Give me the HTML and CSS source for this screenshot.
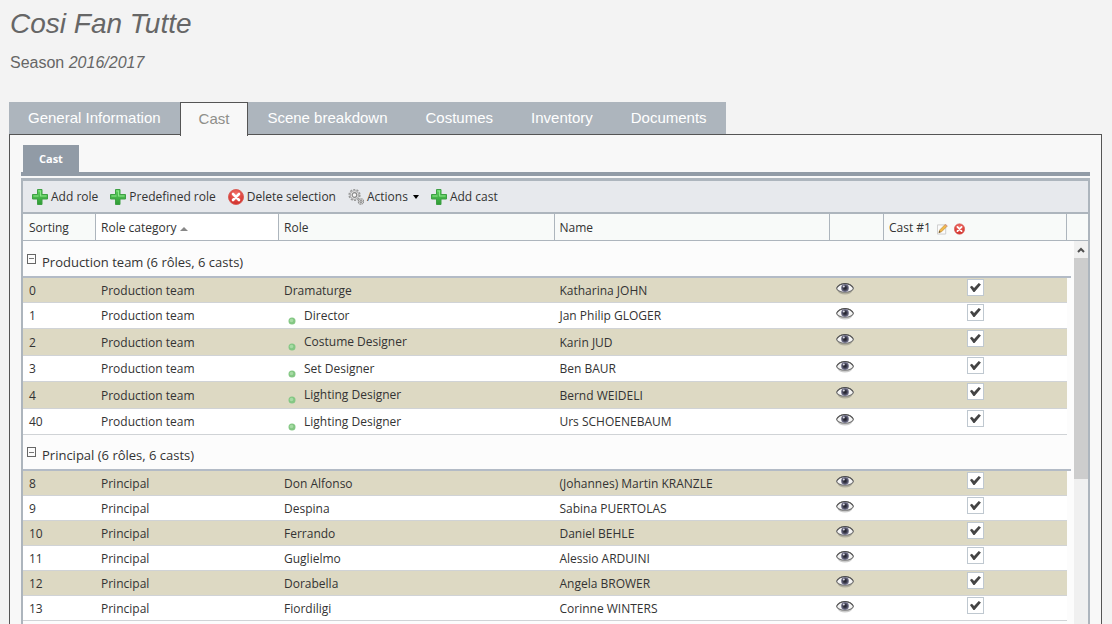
FILE: index.html
```html
<!DOCTYPE html>
<html lang="en">
<head>
    <meta charset="UTF-8">
    <meta name="viewport" content="width=device-width, initial-scale=1.0">
    <title>Cosi Fan Tutte - Cast</title>
    <link rel="stylesheet" href="styles.css">
</head>
<body>
    <!-- icon set -->
    <svg class="sprite" aria-hidden="true">
        <defs>
            <linearGradient id="green" x1="0" y1="0" x2="0" y2="1">
                <stop offset="0" stop-color="#5fd35f"/>
                <stop offset="1" stop-color="#2e9a35"/>
            </linearGradient>
            <radialGradient id="red" cx="0.5" cy="0.3" r="0.7">
                <stop offset="0" stop-color="#f4736b"/>
                <stop offset="1" stop-color="#cf2b27"/>
            </radialGradient>
            <radialGradient id="iris">
                <stop offset="0" stop-color="#1c1c26"/>
                <stop offset="0.5" stop-color="#3c3c4c"/>
                <stop offset="1" stop-color="#7d7d98"/>
            </radialGradient>
        </defs>
        <symbol id="icon-add" viewBox="0 0 16 16">
            <path d="M5.500.5h4.500v5h5.500v4.500h-5.500v5.500h-4.500v-5.500h-5v-4.500h5z" fill="url(#green)" stroke="#3fa045"/>
            <path d="M6.500 1.500h2.500v5h5.500v1h-6.500v-5h-1.500zM1.500 6.500h5v1h-5z" fill="#8be68a"/>
        </symbol>
        <symbol id="icon-delete" viewBox="0 0 16 16">
            <circle cx="8" cy="8" r="7.500" fill="url(#red)" stroke="#d9605a"/>
            <path d="M5 5l6 6M11 5l-6 6" stroke="#fff" stroke-width="2.600" stroke-linecap="round"/>
        </symbol>
        <symbol id="icon-gears" viewBox="0 0 16 16">
            <circle cx="6.500" cy="6" r="5.300" fill="none" stroke="#9a9a9a" stroke-width="1.600" stroke-dasharray="2 1.300"/>
            <circle cx="6.500" cy="6" r="4.300" fill="#e6e6e6" stroke="#a6a6a6"/>
            <circle cx="6.500" cy="6" r="2.300" fill="#f6f6f6" stroke="#8a8a8a" stroke-width="1.200"/>
            <circle cx="13" cy="12.500" r="2.700" fill="#e0e0e0" stroke="#8f8f8f" stroke-width="1.200" stroke-dasharray="1.500 .6"/>
            <circle cx="13" cy="12.500" r="1" fill="#fff" stroke="#777"/>
        </symbol>
        <symbol id="icon-edit" viewBox="0 0 12 12">
            <path d="M.5 1.500h9v10h-9z" fill="#fbfbfb" stroke="#c9c9c9"/>
            <path d="M2 10l1-3 6-6 2 2-6 6z" fill="#f2b94a" stroke="#b98a36" stroke-width=".7"/>
            <path d="M8.500 1.500l1-1 2 2-1 1z" fill="#d99a8a"/>
            <path d="M2 10l.6-1.800 1.200 1.200z" fill="#333"/>
        </symbol>
        <symbol id="icon-eye" viewBox="0 0 18 13">
            <ellipse cx="9" cy="9" rx="7" ry="3.500" fill="#000" opacity=".2"/>
            <path d="M.5 6.500C3 .2 15 .2 17.500 6.500 15 11.500 3 11.500.5 6.500z" fill="#f4f4f4" stroke="#777" stroke-width="1.200"/>
            <path d="M1 5.500C4 .2 14 .2 17 5.500" fill="none" stroke="#4c4c4c"/>
            <circle cx="9" cy="6" r="3.900" fill="url(#iris)"/>
            <circle cx="7.800" cy="4.500" r="1" fill="#d8d8e2"/>
        </symbol>
        <symbol id="icon-dot" viewBox="0 0 8 8">
            <circle cx="4" cy="4" r="3.500" fill="#84c784"/>
            <circle cx="3.500" cy="3.500" r="1.800" fill="#a6dba4"/>
        </symbol>
    </svg>

    <header class="page-header">
        <h1>Cosi Fan Tutte</h1>
        <p class="season">Season <em>2016/2017</em></p>
    </header>

    <nav class="tabs">
        <a href="#general">General Information</a>
        <a href="#cast" class="active" aria-current="page">Cast</a>
        <a href="#scenes">Scene breakdown</a>
        <a href="#costumes">Costumes</a>
        <a href="#inventory">Inventory</a>
        <a href="#documents">Documents</a>
    </nav>

    <main class="panel">
        <div class="subtabs"><a href="#cast">Cast</a></div>

        <div class="grid">
            <div class="toolbar">
                <button type="button"><svg class="icon"><use href="#icon-add"/></svg>Add role</button>
                <button type="button"><svg class="icon"><use href="#icon-add"/></svg>Predefined role</button>
                <button type="button"><svg class="icon"><use href="#icon-delete"/></svg>Delete selection</button>
                <button type="button"><svg class="icon"><use href="#icon-gears"/></svg>Actions<span class="caret"></span></button>
                <button type="button"><svg class="icon"><use href="#icon-add"/></svg>Add cast</button>
            </div>

            <table class="grid-head">
                <colgroup>
                    <col class="col-sort"><col class="col-category"><col><col><col class="col-view"><col class="col-cast"><col class="col-scroll">
                </colgroup>
                <thead>
                    <tr>
                        <th scope="col">Sorting</th>
                        <th scope="col" class="sorted" aria-sort="ascending">Role category<span class="sort-arrow"></span></th>
                        <th scope="col">Role</th>
                        <th scope="col">Name</th>
                        <th></th>
                        <th scope="col">
                            <div class="cast-title">Cast #1
                                <button type="button" aria-label="Edit cast"><svg class="icon-small"><use href="#icon-edit"/></svg></button>
                                <button type="button" aria-label="Delete cast"><svg class="icon-small"><use href="#icon-delete"/></svg></button>
                            </div>
                        </th>
                        <th></th>
                    </tr>
                </thead>
            </table>

            <div class="grid-scroll">
                <table class="grid-body">
                    <colgroup>
                        <col class="col-sort"><col class="col-category"><col><col><col class="col-view"><col class="col-cast"><col class="col-edge">
                    </colgroup>
                    <tbody id="rows"></tbody>
                </table>
                <div class="scrollbar">
                    <div class="scroll-up"><svg viewBox="0 0 8 6"><path d="M1 5l3-3 3 3" fill="none" stroke="#505050" stroke-width="2"/></svg></div>
                    <div class="scroll-thumb"></div>
                </div>
            </div>
        </div>
    </main>

    <script>
        const groups = [
            {
                name: 'Production team',
                rows: [
                    [0, 'Dramaturge', 'Katharina JOHN'],
                    [1, 'Director', 'Jan Philip GLOGER', true],
                    [2, 'Costume Designer', 'Karin JUD', true],
                    [3, 'Set Designer', 'Ben BAUR', true],
                    [4, 'Lighting Designer', 'Bernd WEIDELI', true],
                    [40, 'Lighting Designer', 'Urs SCHOENEBAUM', true]
                ]
            },
            {
                name: 'Principal',
                rows: [
                    [8, 'Don Alfonso', '(Johannes) Martin KRANZLE'],
                    [9, 'Despina', 'Sabina PUERTOLAS'],
                    [10, 'Ferrando', 'Daniel BEHLE'],
                    [11, 'Guglielmo', 'Alessio ARDUINI'],
                    [12, 'Dorabella', 'Angela BROWER'],
                    [13, 'Fiordiligi', 'Corinne WINTERS']
                ]
            }
        ];

        let html = '';
        groups.forEach((group) => {
            html += `<tr class="group"><td colspan="7"><div class="group-title">
                <button type="button" class="collapse" aria-label="Collapse ${group.name}"></button>
                ${group.name} (${group.rows.length} rôles, ${group.rows.length} casts)</div></td></tr>`;
            group.rows.forEach(([order, role, name, child], i) => {
                const cls = (i % 2 ? 'odd' : 'even') + (child ? ' child' : '');
                const dot = child ? '<svg class="dot"><use href="#icon-dot"/></svg>' : '';
                html += `<tr class="${cls}">
                    <td>${order}</td>
                    <td>${group.name}</td>
                    <td>${dot}${role}</td>
                    <td>${name}</td>
                    <td class="view"><button type="button" aria-label="View ${name}"><svg><use href="#icon-eye"/></svg></button></td>
                    <td class="check"><input type="checkbox" checked aria-label="${name} in cast #1"></td>
                    <td class="edge"></td>
                </tr>`;
            });
        });
        document.querySelector('#rows').innerHTML = html;
    </script>
</body>
</html>
```
FILE: styles.css
```css
* {
    box-sizing: border-box;
}
body {
    margin: 0;
    padding: 0 10px 0 9px;
    height: 100vh;
    display: flex;
    flex-direction: column;
    overflow: hidden;
    background-color: #f3f3f3;
    color: #333;
    font-family: 'Open Sans', 'Noto Sans', sans-serif;
    font-size: 12px;
}
a {
    text-decoration: none;
}
button {
    border: none;
    padding: 0;
    background: none;
    color: inherit;
    font: inherit;
    cursor: pointer;
}
svg {
    display: block;
}
.sprite {
    position: absolute;
    width: 0;
    height: 0;
}

/* title */
.page-header {
    height: 102px;
    padding: 8px 1px 0;
    color: #666;
    font-family: 'Liberation Sans', Arial, sans-serif;
}
h1 {
    margin: 0;
    font-size: 28px;
    font-weight: normal;
    font-style: italic;
    line-height: 32px;
}
.season {
    margin: 14px 0 0;
    font-size: 16px;
    line-height: 18px;
}

/* main tabs */
.tabs {
    display: flex;
    height: 32px;
    font-family: 'Liberation Sans', Arial, sans-serif;
    font-size: 15px;
    line-height: 32px;
}
.tabs a {
    padding: 0 19px;
    background-color: #adb5bd;
    color: #fff;
}
.tabs .active {
    height: 34px;
    padding: 0 18px;
    border: 1px solid #555;
    border-bottom: none;
    background-color: #f8f8f8;
    color: #8f8f8a;
    z-index: 1;
}

.panel {
    flex: 1;
    min-height: 0;
    display: flex;
    flex-direction: column;
    padding: 10px 11px 0;
    border: 1px solid #555;
    border-bottom: none;
    background-color: #f8f8f8;
}
.subtabs {
    display: flex;
    padding-left: 2px;
    border-bottom: 4px solid #919ba6;
}
.subtabs a {
    padding: 0 16px;
    background-color: #919ba6;
    color: #fff;
    font-size: 11px;
    font-weight: bold;
    line-height: 27px;
}

/* grid */
.grid {
    flex: 1;
    min-height: 0;
    display: flex;
    flex-direction: column;
    margin-top: 2px;
    border: 2px solid #adb5bd;
    border-top-width: 3px;
    border-bottom: none;
    background-color: #fcfcfc;
}
.toolbar {
    display: flex;
    align-items: center;
    gap: 12px;
    height: 33px;
    padding-left: 9px;
    border-bottom: 2px solid #adb5bd;
    background-color: #e7e9ed;
}
.toolbar button {
    display: flex;
    align-items: center;
    gap: 3px;
}
.icon {
    width: 16px;
    height: 16px;
}
.caret {
    margin-left: 2px;
    border: 3px solid transparent;
    border-top: 4px solid #000;
    border-bottom: none;
}
table {
    width: 100%;
    table-layout: fixed;
    border-collapse: separate;
    border-spacing: 0;
}
.col-sort {
    width: 73px;
}
.col-category,
.col-cast {
    width: 183px;
}
.col-view {
    width: 54px;
}
.col-scroll {
    width: 21px;
}
.col-edge {
    width: 4px;
}
th {
    height: 27px;
    padding: 0 5px;
    border-right: 1px solid #adb5bd;
    border-bottom: 1px solid #adb5bd;
    background-color: #f8faf9;
    font-weight: normal;
    text-align: left;
}
th:last-child {
    border-right: none;
}
th:first-child,
td:first-child {
    padding-left: 6px;
}
.sorted {
    background-color: #fff;
}
.sort-arrow {
    display: inline-block;
    margin-left: 3px;
    vertical-align: 1px;
    border: 4px solid transparent;
    border-bottom-color: #888;
    border-top: none;
}
.cast-title {
    display: flex;
    align-items: center;
    gap: 6px;
}
.icon-small {
    width: 11px;
    height: 12px;
    margin-top: 3px;
}

.grid-scroll {
    flex: 1;
    min-height: 0;
    display: flex;
    align-items: flex-start;
    gap: 3px;
    overflow: hidden;
}
.grid-body {
    flex: 1;
}
td {
    height: 25px;
    padding: 0 5px;
    border-bottom: 1px solid #d0d3d6;
}
.even td {
    background-color: #ddd9c3;
}
.odd td {
    background-color: #fff;
}
.child td {
    height: 26px;
}
.child.even td {
    height: 27px;
}
.group td {
    height: 36px;
    padding: 6px 4px 0;
    border-bottom: 2px solid #b3bbc6;
}
.group:first-child td {
    height: 37px;
}
.group-title {
    display: flex;
    align-items: center;
    gap: 6px;
    font-size: 13px;
}
.collapse {
    width: 9px;
    height: 10px;
    margin-bottom: 6px;
    border: 1px solid #666;
    background: linear-gradient(#777, #777) center / 5px 1px no-repeat;
}
.dot {
    display: inline-block;
    width: 8px;
    height: 8px;
    margin: 0 8px 0 4px;
    vertical-align: -5px;
}
.view,
.check {
    vertical-align: top;
}
.view {
    padding: 4px 6px 0;
}
.view button {
    display: block;
}
.view svg {
    width: 18px;
    height: 13px;
}
.check {
    padding-top: 1px;
}
.check input {
    appearance: none;
    display: block;
    width: 17px;
    height: 17px;
    margin: 0 auto;
    border: 1px solid #bfc8d0;
    background-color: #fff;
}
.check input:checked::before {
    content: "";
    display: block;
    width: 11px;
    height: 9px;
    margin: 3px 2px;
    background-color: #444;
    clip-path: polygon(0 45%, 18% 30%, 38% 55%, 80% 0, 100% 18%, 42% 100%, 32% 100%);
}
.grid-body .edge {
    padding: 0;
    border: none;
    background-color: #fcfcfc;
}

.scrollbar {
    width: 14px;
    align-self: stretch;
    background-color: #f0f0f0;
}
.scroll-up {
    display: flex;
    align-items: center;
    justify-content: center;
    height: 17px;
}
.scroll-up svg {
    width: 8px;
    height: 6px;
}
.scroll-thumb {
    height: 221px;
    background-color: #cdcdcd;
}
```
